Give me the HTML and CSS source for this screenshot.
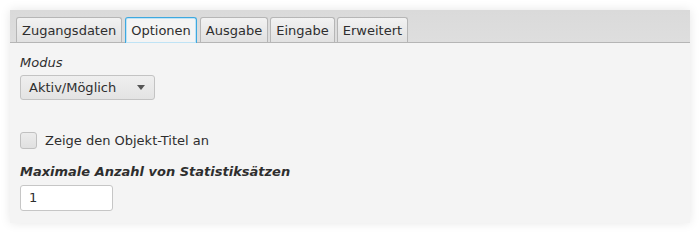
FILE: index.html
```html
<!DOCTYPE html>
<html lang="de">
<head>
<meta charset="utf-8">
<link rel="stylesheet" href="styles.css">
</head>
<body>
<div class="panel">
  <div class="tabbar">
    <div class="tab">Zugangsdaten</div>
    <div class="tab selected">Optionen</div>
    <div class="tab">Ausgabe</div>
    <div class="tab">Eingabe</div>
    <div class="tab">Erweitert</div>
  </div>
  <div class="content">
    <div class="label-italic">Modus</div>
    <div class="select">
      <span>Aktiv/Möglich</span>
      <span class="arrow"></span>
    </div>
    <label class="check">
      <span class="box"></span>
      <span>Zeige den Objekt-Titel an</span>
    </label>
    <div class="label-bold">Maximale Anzahl von Statistiksätzen</div>
    <div class="input">1</div>
  </div>
</div>
</body>
</html>
```

FILE: styles.css
```css
html, body {
  margin: 0;
  padding: 0;
  background: #ffffff;
}
body {
  width: 700px;
  height: 233px;
  padding: 10px;
  box-sizing: border-box;
  font-family: "DejaVu Sans", sans-serif;
  font-size: 13px;
  color: #2e2e2e;
}
.panel {
  width: 680px;
  height: 213px;
  background: #f4f4f4;
  box-shadow: 0 0 10px rgba(0,0,0,0.10);
  display: flex;
  flex-direction: column;
}
.tabbar {
  height: 33px;
  box-sizing: border-box;
  background: linear-gradient(#dadada, #dedede);
  border-bottom: 1px solid #b5b5b5;
  padding: 7px 0 0 6px;
  display: flex;
  gap: 2px;
  align-items: flex-end;
}
.tab {
  height: 25px;
  box-sizing: border-box;
  padding: 3px 5px 0 5px;
  line-height: 20px;
  border: 1px solid #b6b6b6;
  border-bottom: none;
  border-radius: 3px 3px 0 0;
  background: linear-gradient(#f2f2f2, #e1e1e1);
  color: #2e2e2e;
  white-space: nowrap;
}
.tab.selected {
  height: 26px;
  margin: 0 1px -1px 1px;
  background: #f4f4f4;
  border: 1px solid #3ea8df;
  border-bottom: none;
  box-shadow: inset 0 0 0 1px #bfe3f5;
}
.content {
  padding: 9px 10px 0 10px;
  display: flex;
  flex-direction: column;
  align-items: flex-start;
}
.label-italic {
  font-style: italic;
  line-height: 17px;
  margin-top: 2px;
}
.select {
  margin-top: 4px;
  width: 135px;
  height: 25px;
  box-sizing: border-box;
  border: 1px solid #c3c3c3;
  border-radius: 3px;
  background: linear-gradient(#efefef, #e3e3e3);
  display: flex;
  align-items: center;
  justify-content: space-between;
  padding: 0 8px 0 8px;
}
.arrow {
  width: 0;
  height: 0;
  border-left: 4.5px solid transparent;
  border-right: 4.5px solid transparent;
  border-top: 5px solid #555555;
  margin-right: 1px;
}
.check {
  margin-top: 32px;
  display: flex;
  align-items: center;
  gap: 8px;
  height: 17px;
}
.box {
  width: 17px;
  height: 17px;
  box-sizing: border-box;
  border: 1px solid #c0c0c0;
  border-radius: 3px;
  background: linear-gradient(#ececec, #e0e0e0);
}
.label-bold {
  margin-top: 14px;
  font-style: italic;
  font-weight: bold;
  line-height: 17px;
}
.input {
  margin-top: 5px;
  width: 93px;
  height: 26px;
  box-sizing: border-box;
  border: 1px solid #c6c6c6;
  border-radius: 3px;
  background: #ffffff;
  line-height: 24px;
  padding-left: 8px;
}
```
